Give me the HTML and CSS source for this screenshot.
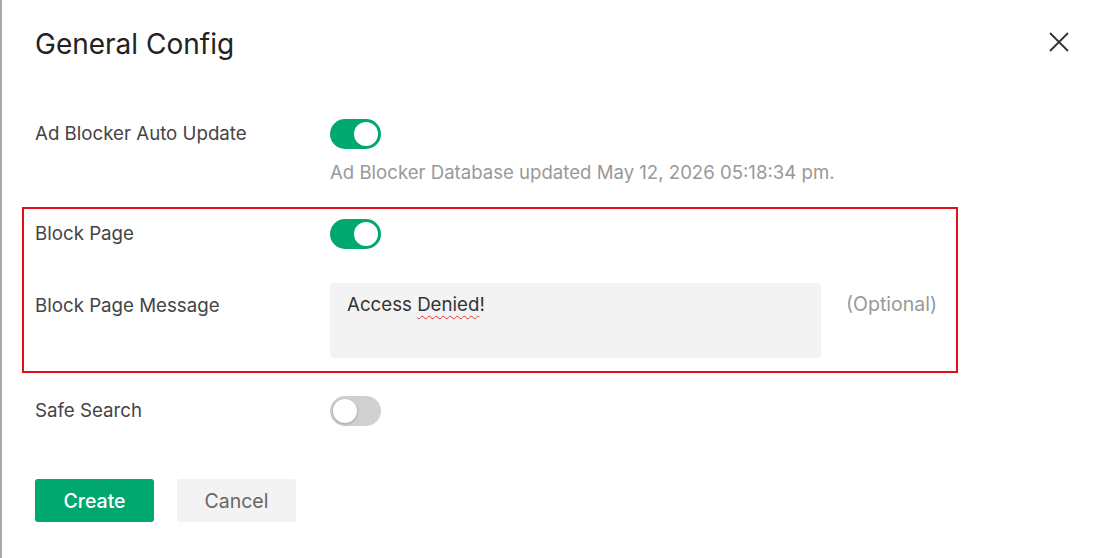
FILE: index.html
```html
<!DOCTYPE html>
<html lang="en">
<head>
    <meta charset="UTF-8">
    <title>General Config</title>
    <link rel="stylesheet" href="styles.css">
</head>
<body>
    <div class="modal">
        <div class="modal-header">
            <h1>General Config</h1>
            <button class="close" aria-label="Close">
                <svg width="22" height="22" viewBox="0 0 22 22"><path d="M2 2 L20 20 M20 2 L2 20" stroke="#333" stroke-width="1.8" fill="none"/></svg>
            </button>
        </div>

        <div class="row first">
            <label>Ad Blocker Auto Update</label>
            <span class="toggle on"><span class="knob"></span></span>
        </div>
        <div class="hint">Ad Blocker Database updated May 12, 2026 05:18:34 pm.</div>

        <div class="highlight">
            <div class="row">
                <label>Block Page</label>
                <span class="toggle on"><span class="knob"></span></span>
            </div>
            <div class="row message">
                <label>Block Page Message</label>
                <div class="field">
                    <div class="textarea">Access <span class="typo">Denied</span>!</div>
                    <span class="optional">(Optional)</span>
                </div>
            </div>
        </div>

        <div class="row">
            <label>Safe Search</label>
            <span class="toggle"><span class="knob"></span></span>
        </div>

        <div class="actions">
            <button class="btn primary">Create</button>
            <button class="btn">Cancel</button>
        </div>
    </div>
</body>
</html>
```

FILE: styles.css
```css
body {
    margin: 0;
    font-family: Inter, "Noto Sans", sans-serif;
    background: #fff;
    color: #444;
}
.modal {
    height: 558px;
    box-sizing: border-box;
    border-left: 2px solid #a8a8a8;
    padding: 28px 28px 0 33px;
}
.modal-header {
    display: flex;
    justify-content: space-between;
    align-items: center;
    height: 31px;
}
.modal-header h1 {
    margin: 0;
    font-size: 28px;
    font-weight: 400;
    color: #222;
}
.close {
    border: 0;
    background: none;
    padding: 0;
    width: 22px;
    height: 22px;
    margin-top: -4px;
    cursor: pointer;
}
.row {
    display: grid;
    grid-template-columns: 295px 1fr;
    align-items: center;
    margin-top: 23px;
}
.row.first { margin-top: 60px; }
.row label {
    font-size: 18.7px;
    line-height: 30px;
    color: #444;
}
.toggle {
    position: relative;
    display: block;
    width: 51px;
    height: 30px;
    border-radius: 15px;
    background: #d0d0d0;
}
.toggle .knob {
    position: absolute;
    top: 3px;
    left: 3px;
    width: 24px;
    height: 24px;
    border-radius: 50%;
    background: #fff;
    box-shadow: 0 1px 3px rgba(0, 0, 0, 0.25);
}
.toggle.on { background: #00a870; }
.toggle.on .knob { left: 24px; box-shadow: none; }
.hint {
    margin: 11px 0 0 295px;
    font-size: 18.6px;
    line-height: 24px;
    color: #999;
}
.highlight {
    margin: 23px 0 0 -13px;
    width: 936px;
    box-sizing: border-box;
    border: 2px solid #e3101c;
    padding: 10px 11px 13px;
}
.highlight .row:first-child { margin-top: 0; }
.row.message {
    align-items: start;
    margin-top: 34px;
}
.row.message label { padding-top: 8px; }
.field {
    display: flex;
    align-items: flex-start;
    gap: 25px;
}
.textarea {
    width: 491px;
    height: 75px;
    box-sizing: border-box;
    padding: 10px 17px;
    background: #f3f3f3;
    border-radius: 4px;
    font-size: 18.7px;
    line-height: 24px;
    color: #333;
}
.typo {
    text-decoration: underline wavy #e33;
    text-underline-offset: 4px;
    text-decoration-thickness: 1px;
}
.optional {
    padding-top: 9px;
    font-size: 19.5px;
    line-height: 24px;
    color: #999;
}
.actions {
    display: flex;
    gap: 23px;
    margin-top: 53px;
}
.btn {
    width: 119px;
    height: 43px;
    border: 0;
    border-radius: 3px;
    background: #f3f3f3;
    color: #666;
    font-family: inherit;
    font-size: 19.5px;
    cursor: pointer;
}
.btn.primary {
    background: #00a870;
    color: #fff;
    font-weight: 500;
}
```
